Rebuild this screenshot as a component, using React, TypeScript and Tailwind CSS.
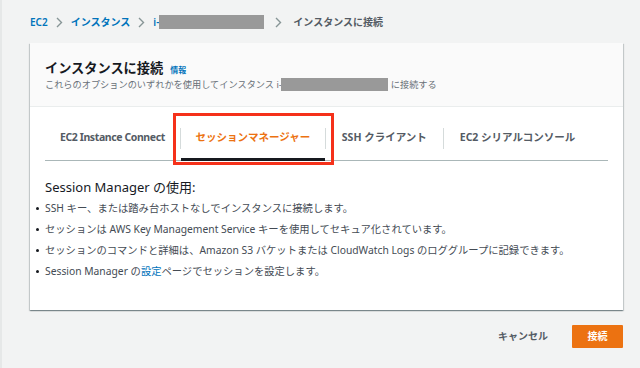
import React from "react";

const font = { fontFamily: '"Noto Sans", "Noto Sans CJK JP", sans-serif' };

function Chevron() {
  return (
    <svg width="7" height="11" viewBox="0 0 7 11" className="shrink-0">
      <polyline points="1,1 5.5,5.5 1,10" fill="none" stroke="#879596" strokeWidth="1.4" />
    </svg>
  );
}

function Sep() {
  return <div className="w-px h-[21px] bg-[#d5dbdb] self-center shrink-0" />;
}

export default function App() {
  const bullets: React.ReactNode[] = [
    "SSH キー、または踏み台ホストなしでインスタンスに接続します。",
    "セッションは AWS Key Management Service キーを使用してセキュア化されています。",
    "セッションのコマンドと詳細は、Amazon S3 バケットまたは CloudWatch Logs のロググループに記録できます。",
    <>
      Session Manager の<span className="text-[#0073bb]">設定</span>ページでセッションを設定します。
    </>,
  ];
  return (
    <div
      style={font}
      className="w-[640px] h-[368px] bg-[#f2f3f3] border-l-[2px] border-[#e6e8e8] flex flex-col pl-[28px] pr-[17px] overflow-hidden"
    >
      {/* breadcrumb */}
      <div className="pt-[14px] h-[30px] flex items-center text-[10px] leading-[16px] font-semibold">
        <span className="text-[#0073bb]">EC2</span>
        <span className="mx-[8px] flex"><Chevron /></span>
        <span className="text-[#0073bb]">インスタンス</span>
        <span className="mx-[8px] flex"><Chevron /></span>
        <span className="text-[#0073bb]">i-</span>
        <span className="w-[105px] h-[14px] bg-[#999999] ml-[0px]" />
        <span className="mx-[11px] flex"><Chevron /></span>
        <span className="text-[#545b64]">インスタンスに接続</span>
      </div>

      {/* card */}
      <div className="mt-[13px] h-[267px] bg-white flex flex-col shadow-[0_1px_1px_0_rgba(0,28,36,0.3),1px_1px_1px_0_rgba(0,28,36,0.15),-1px_1px_1px_0_rgba(0,28,36,0.15)]">
        <div className="bg-[#fafafa] border-b border-[#eaeded] px-[15px] pt-[16px] pb-[15px]">
          <div className="flex items-baseline">
            <span className="text-[13.2px] leading-[18px] font-bold text-[#16191f]">インスタンスに接続</span>
            <span className="ml-[7px] text-[8px] font-bold text-[#0073bb]">情報</span>
          </div>
          <div className="mt-[1px] flex items-center text-[9.2px] leading-[12px] text-[#687078]">
            <span>これらのオプションのいずれかを使用してインスタンス i-</span>
            <span className="w-[107px] h-[13px] bg-[#999999] ml-[-1px]" />
            <span className="ml-[3px]">に接続する</span>
          </div>
        </div>

        <div className="px-[15px] pt-[10px]">
          <div className="flex border-b border-[#aab7b8] text-[10.5px] font-bold">
            <div className="h-[44px] -mb-px border-b-[3px] border-transparent px-[15px] flex items-center text-[#545b64] tracking-[-0.4px]">
              EC2 Instance Connect
            </div>
            <Sep />
            <div className="relative h-[44px] -mb-px border-b-[3px] border-[#16191f] w-[144px] flex items-center justify-center text-[#ec7211]">
              セッションマネージャー
              <div className="absolute -left-[8px] -right-[9px] -top-[4px] -bottom-[7px] border-[3px] border-[#f5311a]" />
            </div>
            <Sep />
            <div className="h-[44px] -mb-px border-b-[3px] border-transparent px-[16px] flex items-center text-[#545b64]">
              SSH クライアント
            </div>
            <Sep />
            <div className="h-[44px] -mb-px border-b-[3px] border-transparent px-[16px] flex items-center text-[#545b64]">
              EC2 シリアルコンソール
            </div>
          </div>

          <div className="mt-[17px] text-[13px] leading-[18px] text-[#16191f]">Session Manager の使用:</div>
          <ul className="mt-[2px] -ml-[9px] text-[10.3px] leading-[21px] text-[#444b54]">
            {bullets.map((b, i) => (
              <li key={i} className="flex items-center whitespace-nowrap">
                <span className="w-[3px] h-[3px] rounded-full bg-[#16191f] mr-[6px] shrink-0" />
                <span>{b}</span>
              </li>
            ))}
          </ul>
        </div>
      </div>

      {/* footer */}
      <div className="mt-[15px] flex items-center justify-end">
        <span className="text-[10px] font-bold text-[#545b64]">キャンセル</span>
        <button className="ml-[24px] w-[51px] h-[23px] bg-[#ec7211] text-white text-[10px] font-bold rounded-[1px] flex items-center justify-center">
          接続
        </button>
      </div>
    </div>
  );
}
